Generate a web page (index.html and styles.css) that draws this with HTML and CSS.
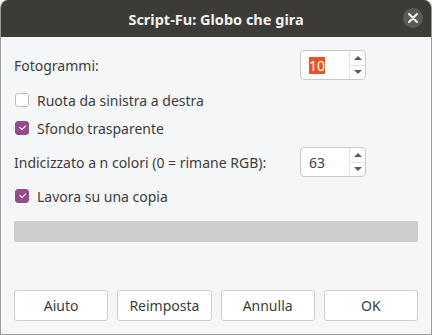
FILE: index.html
```html
<!DOCTYPE html>
<html lang="it">

<head>
    <meta charset="UTF-8" />
    <meta name="viewport" content="width=device-width, initial-scale=1.0" />
    <title>Script-Fu: Globo che gira</title>
    <link rel="stylesheet" href="styles.css">
</head>

<body>
    <div class="window">
        <header class="titlebar">
            <span class="title">Script-Fu: Globo che gira</span>
            <button class="close" aria-label="Chiudi">
                <svg width="10" height="10" viewBox="0 0 10 10">
                    <path d="M1 1 L9 9 M9 1 L1 9" stroke="#fff" stroke-width="1.8" stroke-linecap="round" />
                </svg>
            </button>
        </header>

        <main class="content">
            <div class="field">
                <span>Fotogrammi:</span>
                <div class="spin">
                    <span class="spin-value"><span class="selected">10</span></span>
                    <div class="spin-arrows">
                        <span class="arrow up"></span>
                        <span class="arrow down"></span>
                    </div>
                </div>
            </div>

            <label class="check check-first">
                <span class="box"></span>
                Ruota da sinistra a destra
            </label>

            <label class="check">
                <span class="box checked"></span>
                Sfondo trasparente
            </label>

            <div class="field field-second">
                <span>Indicizzato a n colori (0 = rimane RGB):</span>
                <div class="spin">
                    <span class="spin-value">63</span>
                    <div class="spin-arrows">
                        <span class="arrow up"></span>
                        <span class="arrow down"></span>
                    </div>
                </div>
            </div>

            <label class="check check-third">
                <span class="box checked"></span>
                Lavora su una copia
            </label>

            <div class="progress"></div>
        </main>

        <footer class="actions">
            <button class="btn">Aiuto</button>
            <button class="btn">Reimposta</button>
            <button class="btn">Annulla</button>
            <button class="btn">OK</button>
        </footer>
    </div>
</body>

</html>
```

FILE: styles.css
```css
* {
    box-sizing: border-box;
}

body {
    margin: 0;
    background: #ffffff;
    font-family: 'Noto Sans', 'Open Sans', sans-serif;
    font-size: 14px;
    color: #3c3c3c;
}

.window {
    width: 432px;
    height: 335px;
    display: flex;
    flex-direction: column;
    background: #f5f6f7;
    border: 1px solid #9a9a9a;
    border-top: none;
    border-radius: 8px 8px 0 0;
    overflow: hidden;
}

.titlebar {
    height: 37px;
    flex: none;
    display: flex;
    align-items: center;
    justify-content: center;
    position: relative;
    background: #3c3b37;
    color: #f2f1f0;
}

.title {
    font-weight: bold;
    font-size: 14.5px;
}

.close {
    position: absolute;
    right: 8px;
    top: 8px;
    width: 20px;
    height: 20px;
    padding: 0;
    border: none;
    border-radius: 50%;
    background: #5b5a57;
    display: flex;
    align-items: center;
    justify-content: center;
}

.content {
    padding: 13px 13px 0 13px;
    display: flex;
    flex-direction: column;
}

.field {
    display: flex;
    align-items: center;
    justify-content: space-between;
    padding-right: 52px;
}

.field-second {
    margin-top: 9px;
}

.spin {
    width: 66px;
    height: 30px;
    display: flex;
    background: #ffffff;
    border: 1px solid #c9c9c9;
    border-radius: 4px;
}

.spin-value {
    flex: 1;
    display: flex;
    align-items: center;
    padding-left: 8px;
}

.selected {
    background: #e95420;
    color: #ffffff;
    line-height: 17px;
}

.spin-arrows {
    width: 16px;
    display: flex;
    flex-direction: column;
    border-left: 1px solid #e2e2e2;
}

.arrow {
    flex: 1;
    display: flex;
    align-items: center;
    justify-content: center;
}

.arrow.up {
    border-bottom: 1px solid #e2e2e2;
}

.arrow::before {
    content: '';
    border-left: 4px solid transparent;
    border-right: 4px solid transparent;
}

.arrow.up::before {
    border-bottom: 4px solid #5a5a5a;
}

.arrow.down::before {
    border-top: 4px solid #5a5a5a;
}

.check {
    display: flex;
    align-items: center;
    gap: 8px;
    height: 20px;
    margin-top: 8px;
    padding-left: 1px;
}

.check-first {
    margin-top: 10px;
}

.check-third {
    margin-top: 9px;
}

.box {
    width: 14px;
    height: 14px;
    flex: none;
    background: #ffffff;
    border: 1px solid #bdbdbd;
    border-radius: 3px;
    position: relative;
}

.box.checked {
    background: #924d8b;
    border-color: #924d8b;
}

.box.checked::after {
    content: '';
    position: absolute;
    left: 3px;
    top: 2px;
    width: 5px;
    height: 3px;
    border-left: 1.5px solid #ffffff;
    border-bottom: 1.5px solid #ffffff;
    transform: rotate(-45deg) translate(0, 1px);
}

.progress {
    margin-top: 15px;
    height: 21px;
    background: #cdcdcd;
    border-radius: 2px;
}

.actions {
    margin-top: auto;
    display: flex;
    gap: 9px;
    padding: 0 13px 13px 13px;
}

.btn {
    flex: 1;
    height: 31px;
    background: #ffffff;
    border: 1px solid #cdcdcd;
    border-radius: 3px;
    font-family: inherit;
    font-size: 14px;
    color: #3c3c3c;
}
```
